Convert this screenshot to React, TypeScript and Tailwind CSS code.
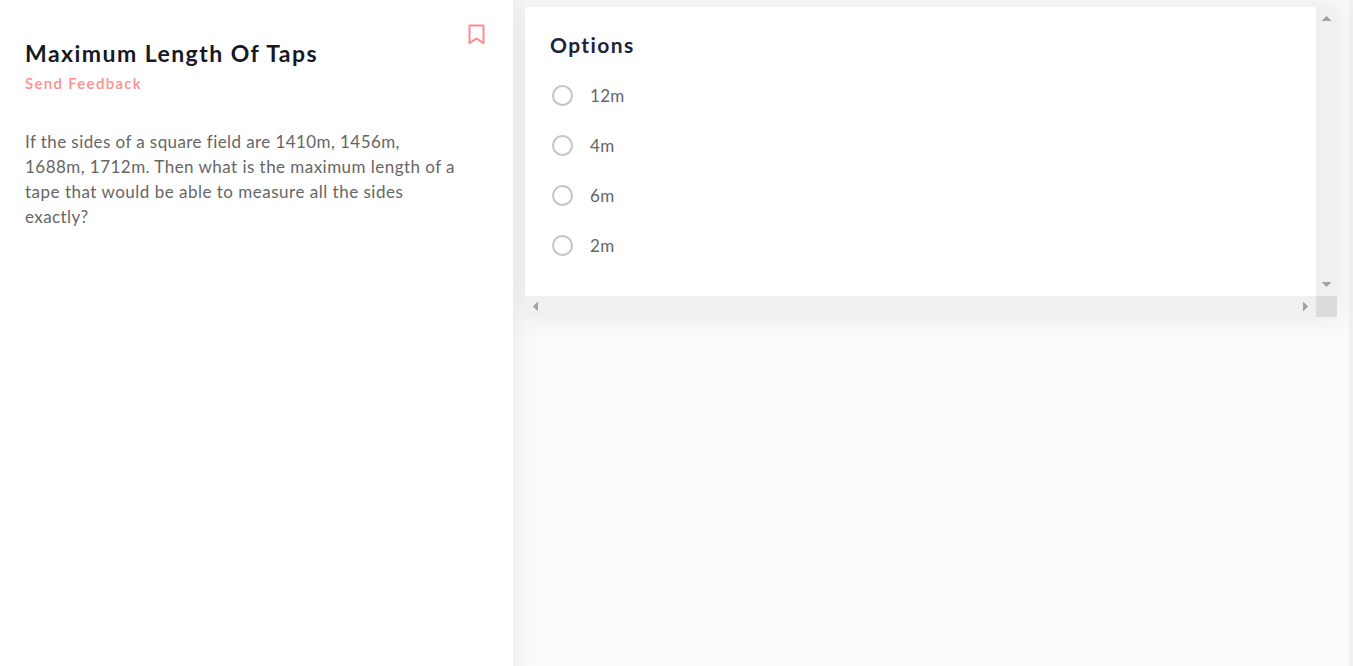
const options = ["12m", "4m", "6m", "2m"];

const lines = [
  { text: "If the sides of a square field are 1410m, 1456m,", spacing: "tracking-[0.42px]" },
  { text: "1688m, 1712m. Then what is the maximum length of a", spacing: "tracking-[0.46px]" },
  { text: "tape that would be able to measure all the sides", spacing: "tracking-[0.5px]" },
  { text: "exactly?", spacing: "tracking-[0.4px]" },
];

function Arrow({ points, className, viewBox }: { points: string; className: string; viewBox: string }) {
  return (
    <svg className={className} viewBox={viewBox} fill="#a3a3a3" shapeRendering="crispEdges">
      <polygon points={points} />
    </svg>
  );
}

export default function App() {
  return (
    <div className="flex h-[666px] w-full overflow-hidden bg-white font-['Lato',sans-serif]">
      <section className="relative z-10 h-full w-[513px] shrink-0 bg-white pr-7 pl-[25px]">
        <header className="flex justify-between">
          <div className="pt-[37px]">
            <h1 className="text-[23px] leading-8 font-bold tracking-[1.45px] whitespace-nowrap text-[#161824]">
              Maximum Length Of Taps
            </h1>
            <a className="mt-[3px] block text-[15px] leading-[22px] font-semibold tracking-[1.3px] text-[#ff8e8e]">
              Send Feedback
            </a>
          </div>
          <svg className="mt-6 h-[21px] w-[17px]" viewBox="0 0 17 21" fill="none" stroke="#ff8a8f" strokeWidth="2" strokeLinejoin="round">
            <path d="M1.5 1.5h14v17.7l-7-4.7-7 4.7z" />
          </svg>
        </header>
        <div className="mt-[35px] text-[17px] leading-[25px] text-[#666]">
          {lines.map(({ text, spacing }) => (
            <p key={text} className={`whitespace-nowrap ${spacing}`}>{text}</p>
          ))}
        </div>
      </section>
      <section className="h-full flex-1 border-r-4 border-[#f1f1f1] bg-[#fbfbfb] bg-linear-to-r from-[#f0f0f0] via-[#f8f8f8] via-[12px] to-[#fbfbfb] to-[24px] pt-[7px] pl-3">
        <div className="grid h-[310px] w-[812px] grid-cols-[791px_21px] grid-rows-[289px_21px] shadow-[0_0_30px_#00000016]">
          <div className="bg-white pt-6 pl-[25px]">
            <h2 className="text-[21px] leading-7 font-bold tracking-[1.4px] text-[#1d2340]">Options</h2>
            <div className="mt-[11px]">
              {options.map((option) => (
                <label key={option} className="flex h-[50px] items-center pl-0.5">
                  <span className="size-[21px] rounded-full border-2 border-[#c4c4c4]" />
                  <span className="pt-px pl-[17px] text-[17px] tracking-[0.3px] text-[#666]">{option}</span>
                </label>
              ))}
            </div>
          </div>
          <div className="flex flex-col items-center justify-between bg-[#f0f0f0] py-[9px]">
            <Arrow className="h-[5px] w-[9px]" viewBox="0 0 9 5" points="4.5,0 9,5 0,5" />
            <Arrow className="h-[5px] w-[9px]" viewBox="0 0 9 5" points="0,0 9,0 4.5,5" />
          </div>
          <div className="flex items-center justify-between bg-[#f0f0f0] px-2">
            <Arrow className="h-[9px] w-[5px]" viewBox="0 0 5 9" points="5,0 5,9 0,4.5" />
            <Arrow className="h-[9px] w-[5px]" viewBox="0 0 5 9" points="0,0 5,4.5 0,9" />
          </div>
          <div className="bg-[#dbdbdb]" />
        </div>
      </section>
    </div>
  );
}
